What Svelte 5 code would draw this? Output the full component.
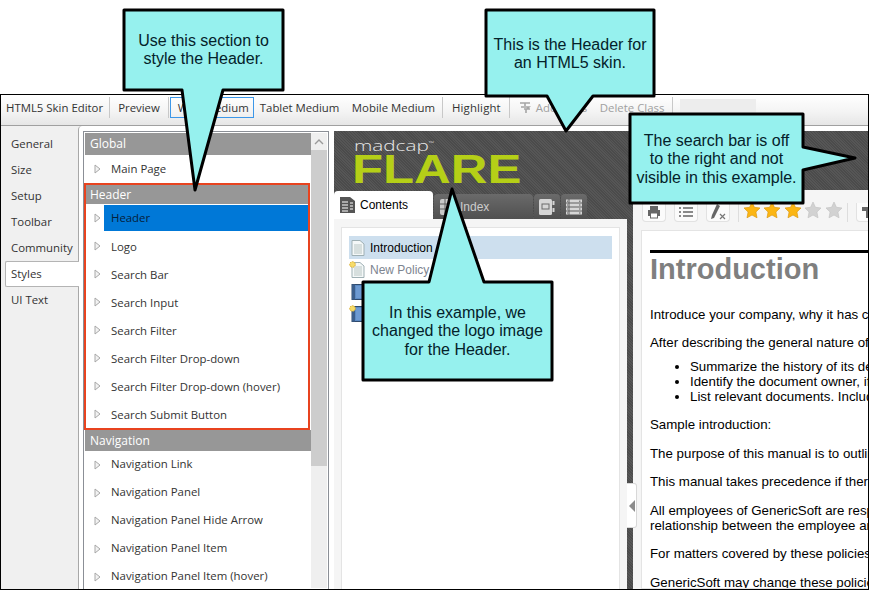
<script>
	const tabs = ['General', 'Size', 'Setup', 'Toolbar', 'Community', 'Styles', 'UI Text'];
	const headerRows = ['Header', 'Logo', 'Search Bar', 'Search Input', 'Search Filter', 'Search Filter Drop-down', 'Search Filter Drop-down (hover)', 'Search Submit Button'];
	const navRows = ['Navigation Link', 'Navigation Panel', 'Navigation Panel Hide Arrow', 'Navigation Panel Item', 'Navigation Panel Item (hover)'];
	const stars = [true, true, true, false, false];
</script>

{#snippet arrow()}
	<svg class="arrow" width="7" height="10" viewBox="0 0 7 10"><path d="M1 1 L6 5 L1 9 Z" fill="#f2f2f2" stroke="#a8a8a8" /></svg>
{/snippet}

{#snippet docIcon(isNew)}
	<svg class="tree-icon" width="18" height="18" viewBox="0 0 18 18">
		<path d="M3 1.5 H11 L15 5 V16.5 H3 Z" fill="#f4f8f8" stroke="#9fb0b4" />
		<path d="M5 6 H13 M5 8 H13 M5 10 H13 M5 12 H13 M5 14 H13" stroke="#b9c6c4" />
		{#if isNew}<circle cx="3.5" cy="3.5" r="2.8" fill="#f6dc6a" stroke="#d9a92c" stroke-dasharray="1.5 1" />{/if}
	</svg>
{/snippet}

{#snippet bookIcon(isNew)}
	<svg class="tree-icon" width="18" height="18" viewBox="0 0 18 18">
		<rect x="3" y="1.5" width="13" height="15" fill="#5b8ac4" stroke="#2f4a6c" />
		<rect x="3" y="1.5" width="3" height="15" fill="#3c5f8c" />
		<rect x="7" y="3" width="8" height="12" fill="#6d9ad2" />
		{#if isNew}<circle cx="3.5" cy="3.5" r="2.8" fill="#f6dc6a" stroke="#d9a92c" stroke-dasharray="1.5 1" />{/if}
	</svg>
{/snippet}

<div class="page">
	<div class="window">
		<div class="toolbar">
			<span class="tool sep first">HTML5 Skin Editor</span>
			<span class="tool sep">Preview</span>
			<span class="tool active">Web Medium</span>
			<span class="tool tablet">Tablet Medium</span>
			<span class="tool sep mobile">Mobile Medium</span>
			<span class="tool sep highlight">Highlight</span>
			<svg class="tool-icon" width="14" height="14" viewBox="0 0 14 14"><path d="M2 3 H12 M7 3 V6 M3 7 H11 L9 9 M6 9 H12 M8 9 V13" stroke="#a5a5a5" stroke-width="1.6" fill="none" /></svg>
			<span class="tool disabled add">Add Class</span>
			<span class="tool disabled sep delete">Delete Class</span>
			<span class="blank"></span>
		</div>

		<div class="body">
			<nav class="sidebar">
				{#each tabs as tab}
					<div class="side-tab" class:selected={tab === 'Styles'}>{tab}</div>
				{/each}
			</nav>

			<div class="panel">
				<div class="list-frame">
					<div class="list">
						<div class="band">Global</div>
						<div class="row">{@render arrow()}<span class="label">Main Page</span></div>
						<div class="section">
							<div class="band">Header</div>
							{#each headerRows as row, i}
								<div class="row">{@render arrow()}<span class="label" class:current={i === 0}>{row}</span></div>
							{/each}
						</div>
						<div class="band">Navigation</div>
						{#each navRows as row}
							<div class="row">{@render arrow()}<span class="label">{row}</span></div>
						{/each}
					</div>
					<div class="scrollbar">
						<div class="scroll-up">
							<svg width="10" height="6" viewBox="0 0 10 6"><path d="M1 5 L5 1 L9 5" fill="none" stroke="#9a9a9a" stroke-width="1.4" /></svg>
						</div>
						<div class="thumb"></div>
					</div>
				</div>

				<div class="viewer">
					<div class="logo-bar">
						<div class="madcap">madcap<sup>™</sup></div>
						<div class="flare">FLARE</div>
					</div>
					<div class="panes">
						<div class="nav-pane">
							<div class="nav-tabs">
								<div class="nav-tab active">
									<svg width="15" height="16" viewBox="0 0 15 16"><path d="M0 0 H10 L15 4 V16 H0 Z" fill="#555" /><path d="M2 5 H8 M2 8 H8 M2 11 H8 M2 14 H8 M10 6 H13 M10 9 H13 M10 12 H13" stroke="#fff" stroke-width="1.2" /></svg>
									Contents
								</div>
								<div class="nav-tab index">
									<svg width="14" height="16" viewBox="0 0 14 16"><rect width="14" height="16" rx="2" fill="#c9c9c9" /><path d="M5 0 V16 M10 0 V16 M0 5 H14 M0 10 H14" stroke="#5f5f5f" /></svg>
									Index
								</div>
								<div class="nav-tab small">
									<svg width="16" height="16" viewBox="0 0 16 16"><rect width="13" height="16" rx="1.5" fill="#d6d6d6" /><rect x="3" y="5" width="7" height="5" fill="none" stroke="#6a6a6a" /><path d="M14.5 2 V6 M14.5 9 V13" stroke="#d6d6d6" stroke-width="2" /></svg>
								</div>
								<div class="nav-tab small">
									<svg width="16" height="16" viewBox="0 0 16 16"><path d="M0 0.5 H16 V15.5 H0 Z" fill="#d6d6d6" /><path d="M0 4 H16 M0 8 H16 M0 12 H16 M3 0 V16" stroke="#5f5f5f" /><path d="M13 2.2 H14.5 M13 6 H14.5 M13 10 H14.5 M13 14 H14.5 M1 2.2 H2 M1 6 H2 M1 10 H2 M1 14 H2" stroke="#5f5f5f" /></svg>
								</div>
							</div>
							<div class="nav-body">
								<div class="tree">
									<div class="tree-row current">{@render docIcon(false)}<span>Introduction</span></div>
									<div class="tree-row muted">{@render docIcon(true)}<span>New Policy</span></div>
									<div class="tree-row">{@render bookIcon(false)}</div>
									<div class="tree-row">{@render bookIcon(true)}</div>
								</div>
							</div>
						</div>

						<div class="divider"></div>

						<div class="doc-pane">
							<div class="doc-tools">
								<span class="doc-btn">
									<svg width="14" height="14" viewBox="0 0 14 14"><path d="M3 1 H11 V5 H3 Z M1 5 H13 V11 H1 Z" fill="#666" /><rect x="3.5" y="8" width="7" height="5" fill="#fff" stroke="#666" /></svg>
								</span>
								<span class="doc-btn">
									<svg width="14" height="12" viewBox="0 0 14 12"><path d="M0 2 H2 M4 2 H14 M0 6 H2 M4 6 H14 M0 10 H2 M4 10 H14" stroke="#666" stroke-width="1.4" /></svg>
								</span>
								<span class="doc-btn">
									<svg width="16" height="16" viewBox="0 0 16 16"><path d="M7 0 L10 2 L4 14 L1 15 L2 11 Z" fill="#666" /><path d="M10 10 L15 15 M15 10 L10 15" stroke="#777" stroke-width="1.2" /></svg>
								</span>
								<span class="stars">
									{#each stars as on}
										<svg width="18" height="18" viewBox="0 0 18 18"><path d="M9 1 L11.4 6.3 L17 7 L12.9 11 L14 16.8 L9 14 L4 16.8 L5.1 11 L1 7 L6.6 6.3 Z" fill={on ? '#fbb614' : '#d2d2d2'} stroke={on ? '#dc9a10' : '#c4c4c4'} stroke-width="0.7" /></svg>
									{/each}
								</span>
								<span class="doc-btn last">
									<svg width="14" height="14" viewBox="0 0 14 14"><path d="M1 2 H13 V6 H9 V13 H5 V6 H1 Z" fill="#666" /></svg>
								</span>
							</div>
							<article class="doc">
								<h1>Introduction</h1>
								<p class="lead">Introduce your company, why it has created this manual for employees.</p>
								<p class="before-list">After describing the general nature of the manual, you might do the following:</p>
								<ul>
									<li>Summarize the history of its development and revisions.</li>
									<li>Identify the document owner, if there is one in your company.</li>
									<li>List relevant documents. Include links where they are available.</li>
								</ul>
								<p>Sample introduction:</p>
								<p>The purpose of this manual is to outline the policies of the company.</p>
								<p>This manual takes precedence if there is any conflict with other material.</p>
								<p>All employees of GenericSoft are responsible for reading this manual.<br />relationship between the employee and the company is not changed by it.</p>
								<p>For matters covered by these policies, please contact your manager.</p>
								<p>GenericSoft may change these policies at any time without prior notice.</p>
							</article>
						</div>
					</div>
					<div class="handle">
						<svg width="6" height="12" viewBox="0 0 6 12"><path d="M6 0 V12 L0 6 Z" fill="#8c8c8c" /></svg>
					</div>
				</div>
			</div>
		</div>
	</div>

	<svg class="callouts" width="869" height="590" viewBox="0 0 869 590">
		<g fill="#96f1ee" stroke="#000" stroke-width="3" stroke-linejoin="round">
			<path d="M124 10 H283 V90 H223 L195 190 L182 90 H124 Z" />
			<path d="M486 10 H654 V96 H593 L566 131 L547 96 H486 Z" />
			<path d="M630 114 H803 V147 L855 158 L803 170 V203 H630 Z" />
			<path d="M363 282 H429 L452 189 L484 282 H552 V380 H363 Z" />
		</g>
	</svg>
	<div class="note note-style">Use this section to<br />style the Header.</div>
	<div class="note note-skin">This is the Header for<br />an HTML5 skin.</div>
	<div class="note note-search">The search bar is off<br />to the right and not<br />visible in this example.</div>
	<div class="note note-logo">In this example, we<br />changed the logo image<br />for the Header.</div>
</div>

<style>
	:global(body) {
		margin: 0;
		background: #fff;
	}

	.page {
		position: relative;
		width: 869px;
		height: 590px;
		overflow: hidden;
		background: #fff;
		font-family: "Open Sans", sans-serif;
		font-size: 11.4px;
		color: #333;
	}

	.window {
		position: absolute;
		top: 94px;
		left: 0;
		width: 867px;
		height: 494px;
		border: 1px solid #000;
		display: flex;
		flex-direction: column;
		overflow: hidden;
		background: #f0f0f0;
	}

	.toolbar {
		height: 31px;
		flex: none;
		display: flex;
		align-items: flex-start;
		padding-top: 1px;
		box-sizing: border-box;
		background: linear-gradient(#fff, #f4f4f4 55%, #e6e6e6);
		border-bottom: 1px solid #a0a0a0;
		white-space: nowrap;
	}

	.tool {
		height: 21px;
		line-height: 21px;
		padding: 0 8px;
		margin-top: 1px;
		box-sizing: border-box;
	}

	.tool.first {
		padding: 0 6px 0 5px;
	}

	.tool.sep {
		border-right: 1px solid #c8c8c8;
	}

	.tool.active {
		border: 1px solid #3c97e8;
		line-height: 19px;
		width: 84px;
		margin-left: 1px;
		padding: 0 7px;
	}

	.tool.tablet {
		margin-left: 6px;
		padding: 0;
		width: 92px;
		letter-spacing: -0.03px;
	}

	.tool.mobile {
		padding: 0 7px 0 0;
	}

	.tool.highlight {
		padding: 0 8px 0 9px;
		letter-spacing: 0.15px;
	}

	.tool.disabled {
		color: #a0a0a0;
	}

	.tool.add {
		width: 68px;
		padding-left: 4px;
	}

	.tool.delete {
		padding-left: 0;
	}

	.tool-icon {
		margin: 4px 0 0 8px;
	}

	.blank {
		width: 76px;
		height: 22px;
		margin: 3px 0 0 7px;
		background: #ededed;
	}

	.body {
		flex: 1;
		display: flex;
		min-height: 0;
	}

	.sidebar {
		width: 77px;
		flex: none;
		padding-top: 5px;
		box-sizing: border-box;
		position: relative;
		z-index: 1;
	}

	.side-tab {
		height: 26px;
		line-height: 26px;
		padding-left: 6px;
		margin-left: 4px;
		box-sizing: border-box;
	}

	.side-tab.selected {
		width: 74px;
		background: #fff;
		border: 1px solid #b4b4b4;
		border-right: none;
		border-radius: 2px 0 0 2px;
		padding-left: 5px;
		line-height: 24px;
	}

	.panel {
		flex: 1;
		display: flex;
		min-width: 0;
		background: #fff;
		border-left: 1px solid #a8a8a8;
		border-radius: 4px 0 0 0;
		padding: 5px 0 0 4px;
		gap: 5px;
	}

	.list-frame {
		width: 246px;
		flex: none;
		box-sizing: border-box;
		display: flex;
		padding: 1px;
		border: 1px solid #8b8f96;
		border-bottom: none;
		overflow: hidden;
	}

	.list {
		width: 226px;
		flex: none;
	}

	.band {
		height: 21px;
		line-height: 21px;
		padding-left: 5px;
		background: #979797;
		color: #fff;
		font-size: 12px;
	}

	.list > .band:first-child {
		height: 22px;
		line-height: 22px;
	}

	.section > .band {
		height: 19px;
		line-height: 19px;
		padding-left: 4px;
	}

	.row {
		height: 28px;
		display: flex;
		align-items: center;
		padding-left: 9px;
	}

	.section {
		width: 222px;
		margin: 2px 3px 2px 1px;
		outline: 2px solid #e8431f;
	}

	.section .row {
		padding-left: 8px;
	}

	.arrow {
		flex: none;
		margin-top: -1px;
	}

	.label {
		flex: 1;
		height: 26px;
		line-height: 26px;
		padding-left: 7px;
		margin-left: 3px;
	}

	.section .label {
		line-height: 28px;
	}

	.section .label.current {
		line-height: 26px;
		background: #0078d7;
		color: #06203a;
	}

	.section ~ .row .label {
		line-height: 24px;
	}

	.scrollbar {
		width: 16px;
		flex: none;
		background: #efefef;
	}

	.scroll-up {
		height: 17px;
		display: flex;
		align-items: center;
		justify-content: center;
	}

	.thumb {
		height: 316px;
		background: #cdcdcd;
	}

	.viewer {
		position: relative;
		flex: 1;
		min-width: 0;
		display: flex;
		flex-direction: column;
		background: repeating-linear-gradient(45deg, #4b4b4b, #4b4b4b 1px, #565656 1px, #565656 2px);
	}

	.logo-bar {
		height: 59px;
		flex: none;
		padding: 7px 0 0 20px;
		box-sizing: border-box;
		color: #e8e8e8;
	}

	.madcap {
		font-family: "Open Sans", sans-serif;
		font-weight: 300;
		font-size: 14px;
		line-height: 15px;
		transform: scaleX(1.48);
		transform-origin: left center;
	}

	.madcap sup {
		font-size: 5px;
		vertical-align: 6px;
		line-height: 0;
	}

	.flare {
		font-family: "Liberation Sans", sans-serif;
		font-weight: 700;
		font-size: 41px;
		line-height: 32px;
		color: #b5cf17;
		transform: scaleX(1.24);
		transform-origin: left center;
		width: 135px;
		margin-left: -2px;
	}

	.panes {
		flex: 1;
		display: flex;
		min-height: 0;
	}

	.nav-pane {
		width: 293px;
		flex: none;
		display: flex;
		flex-direction: column;
	}

	.nav-tabs {
		height: 29px;
		flex: none;
		display: flex;
		align-items: flex-end;
		gap: 1px;
	}

	.nav-tab {
		display: flex;
		align-items: center;
		gap: 6px;
		box-sizing: border-box;
		height: 25px;
		width: 99px;
		padding-left: 6px;
		background: linear-gradient(#6a6a6a, #505050);
		border-radius: 4px 4px 0 0;
		color: #ccc;
		font-family: "Liberation Sans", sans-serif;
		font-size: 12px;
	}

	.nav-tab.active {
		height: 28px;
		background: #fff;
		color: #000;
		padding-bottom: 1px;
		gap: 5px;
	}

	.nav-tab.small {
		width: 26px;
		padding-left: 5px;
		gap: 0;
	}

	.nav-body {
		flex: 1;
		background: #f5f5f5;
		padding: 8px 7px 0 7px;
	}

	.tree {
		height: 100%;
		box-sizing: border-box;
		background: #fff;
		border: 1px solid #e4e4e4;
		border-bottom: none;
		padding: 8px 7px;
		font-family: "Liberation Sans", sans-serif;
		font-size: 12px;
		color: #000;
	}

	.tree-row {
		height: 22px;
		display: flex;
		align-items: center;
		gap: 3px;
		white-space: nowrap;
	}

	.tree-row.current {
		height: 23px;
		background: #cddfee;
	}

	.tree-row.muted {
		color: #7d8490;
	}

	.divider {
		width: 6px;
		flex: none;
	}

	.handle {
		position: absolute;
		left: 293px;
		top: 352px;
		width: 10px;
		height: 45px;
		display: flex;
		align-items: center;
		justify-content: center;
		box-sizing: border-box;
		background: #fff;
		border: 1px solid #d8d8d8;
		border-left: none;
		border-radius: 0 3px 3px 0;
	}

	.doc-pane {
		flex: 1;
		min-width: 0;
		display: flex;
		flex-direction: column;
		background: #f5f5f5;
		overflow: hidden;
	}

	.doc-tools {
		height: 40px;
		flex: none;
		box-sizing: border-box;
		display: flex;
		align-items: flex-start;
		padding: 13px 0 0 9px;
		gap: 8px;
	}

	.doc-btn {
		flex: none;
		width: 24px;
		height: 19px;
		display: flex;
		align-items: center;
		justify-content: center;
		box-sizing: border-box;
		background: #fbfbfb;
		border: 1px solid #e2e2e2;
		border-top: none;
		border-radius: 0 0 4px 4px;
	}

	.stars {
		flex: none;
		display: flex;
		gap: 2.4px;
		height: 19px;
		padding: 0 4px;
		border-left: 1px solid #ddd;
		border-right: 1px solid #ddd;
	}

	.stars svg {
		margin-top: -2px;
	}

	.doc {
		flex: 1;
		margin-left: 8px;
		padding: 19px 0 0 8px;
		background: #fff;
		border: 1px solid #e4e4e4;
		border-right: none;
		font-family: "Liberation Sans", sans-serif;
		font-size: 13.3px;
		line-height: 15px;
		color: #000;
		white-space: nowrap;
		overflow: hidden;
	}

	.doc h1 {
		margin: 0 0 22px;
		padding-top: 0;
		border-top: 3px solid #000;
		font-size: 29px;
		line-height: 32px;
		font-weight: 700;
		color: #7f7f7f;
	}

	.doc p {
		margin: 0 0 13.5px;
	}

	.doc p.lead {
		margin-bottom: 12.5px;
	}

	.doc p.before-list {
		margin-bottom: 9px;
	}

	.doc ul {
		margin: 0 0 13.5px;
		padding-left: 40px;
	}

	.callouts {
		position: absolute;
		top: 0;
		left: 0;
	}

	.note {
		position: absolute;
		font-family: "Liberation Sans", sans-serif;
		font-size: 16px;
		line-height: 18.4px;
		text-align: center;
		color: #04222a;
		white-space: nowrap;
	}

	.note-style {
		left: 124px;
		width: 159px;
		top: 32px;
	}

	.note-skin {
		left: 486px;
		width: 168px;
		top: 36px;
	}

	.note-search {
		left: 630px;
		width: 173px;
		top: 132px;
	}

	.note-logo {
		left: 363px;
		width: 189px;
		top: 304px;
	}
</style>
